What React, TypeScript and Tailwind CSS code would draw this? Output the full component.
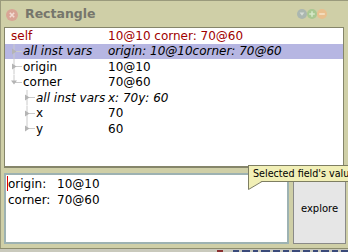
import React from 'react'

type Row = {
  name: string
  value: string
  level: number
  italic?: boolean
  selected?: boolean
  red?: boolean
  open?: boolean
  // vertical guide: 'full' | 'top'
  guide?: 'full' | 'top'
}

const rows: Row[] = [
  { name: 'self', value: '10@10 corner: 70@60', level: 0, red: true },
  { name: 'all inst vars', value: 'origin: 10@10corner: 70@60', level: 1, italic: true, selected: true, guide: 'full' },
  { name: 'origin', value: '10@10', level: 1, guide: 'full' },
  { name: 'corner', value: '70@60', level: 1, open: true, guide: 'top' },
  { name: 'all inst vars', value: 'x: 70y: 60', level: 2, italic: true, guide: 'full' },
  { name: 'x', value: '70', level: 2, guide: 'full' },
  { name: 'y', value: '60', level: 2, guide: 'top' },
]

function Connector({ open, guide }: { open?: boolean; guide?: 'full' | 'top' }) {
  return (
    <svg width="13" height="15.5" viewBox="0 0 13 15.5" className="shrink-0">
      {guide === 'full' && <line x1="5" y1="0" x2="5" y2="15.5" stroke="#cacaca" strokeWidth="1" />}
      {guide === 'top' && <line x1="5" y1="0" x2="5" y2="7.5" stroke="#cacaca" strokeWidth="1" />}
      <line x1="6" y1="7.5" x2="13" y2="7.5" stroke="#cacaca" strokeWidth="1" />
      {open ? (
        <polygon points="2,5.5 8,5.5 5,9.5" fill="#b4b4b4" />
      ) : (
        <polygon points="3,4.5 7.5,7.5 3,10.5" fill="#b4b4b4" />
      )}
    </svg>
  )
}

function TreeRow({ row }: { row: Row }) {
  const color = row.red ? 'text-[#a00000]' : 'text-black'
  return (
    <div className={`flex h-[15.5px] items-center ${row.selected ? 'bg-[#b6b6e2]' : ''}`}>
      <div className="flex w-[103px] shrink-0 items-center">
        {row.level === 0 && <div className="w-[6px]" />}
        {row.level >= 1 && (
          <>
            <div className="w-[4px] shrink-0" />
            {row.level === 1 ? (
              <Connector open={row.open} guide={row.guide} />
            ) : (
              <>
                <div className="w-[13px] shrink-0" />
                <Connector guide={row.guide} />
              </>
            )}
            <div className="w-[1px] shrink-0" />
          </>
        )}
        <span className={`whitespace-nowrap ${color} ${row.italic ? 'italic' : ''}`}>{row.name}</span>
      </div>
      <span className={`whitespace-nowrap ${color} ${row.italic ? 'italic' : ''}`}>{row.value}</span>
    </div>
  )
}

export default function App() {
  return (
    <div className="relative h-[252px] w-[348px] overflow-hidden bg-[#cfcfa7] font-['DejaVu_Sans',sans-serif] text-[12px] leading-none">
      <div className="flex h-[248px] flex-col border-l border-t border-[#9a9a7c]">
        {/* title bar */}
        <div className="flex h-[26px] shrink-0 items-center pl-[5px] pr-[21px]">
          <svg width="12" height="12" viewBox="0 0 12 12" className="mt-[2px]">
            <circle cx="6" cy="6" r="6" fill="#d9a596" />
            <path d="M3.8 3.8 L8.2 8.2 M8.2 3.8 L3.8 8.2" stroke="#f2dcd4" strokeWidth="1.6" />
          </svg>
          <span className="ml-[7px] mt-[1px] text-[12.5px] font-bold text-[#76766c]">Rectangle</span>
          <div className="flex-1" />
          <div className="flex items-center">
            <svg width="10" height="10" viewBox="0 0 10 10">
              <circle cx="5" cy="5" r="5" fill="#abb7b0" />
              <polygon points="2.6,3.6 7.4,3.6 5,6.8" fill="#d6ddd6" />
            </svg>
            <svg width="10" height="10" viewBox="0 0 10 10">
              <circle cx="5" cy="5" r="5" fill="#a9c892" />
              <path d="M5 2.2 V7.8 M2.2 5 H7.8" stroke="#d6e8c8" strokeWidth="1.6" />
            </svg>
            <svg width="10" height="10" viewBox="0 0 10 10">
              <circle cx="5" cy="5" r="5" fill="#e9c08e" />
              <path d="M2.2 5 H7.8" stroke="#f6e2c6" strokeWidth="1.6" />
            </svg>
          </div>
        </div>

        {/* inspector tree */}
        <div className="ml-[3px] h-[141px] w-[340px] shrink-0 overflow-hidden border border-b-2 border-[#85856a] bg-white">
          {rows.map((r, i) => (
            <TreeRow key={i} row={r} />
          ))}
        </div>

        {/* bottom: text pane + explore */}
        <div className="ml-[3px] mt-[5px] flex h-[71px] shrink-0 gap-[4px]">
          <div className="relative w-[285px] border-2 border-[#9db2b2] bg-white px-[2px] pt-[1px] leading-[16px]">
            <div className="absolute left-[1px] top-[1px] h-[15px] w-[1px] bg-[#e00000]" />
            <div className="flex">
              <span className="w-[49px]">origin:</span>
              <span>10@10</span>
            </div>
            <div className="flex">
              <span className="w-[49px]">corner:</span>
              <span>70@60</span>
            </div>
          </div>
          <div className="flex w-[53px] items-center justify-center border border-[#8a8a88] bg-[#e6e6e6] text-[10px] text-black">
            explore
          </div>
        </div>
      </div>

      {/* window behind */}
      <div className="flex h-[4px] items-start border-t border-[#8c8c6e] bg-[#c9c9bc]">
        <div className="ml-[217px] mt-[1px] h-[2px] w-[10px] bg-[#8a3030]" />
        <div className="ml-[10px] mt-[1px] flex gap-[3px]">
          {[6, 8, 5, 9, 7, 6, 8, 7, 5, 8, 6, 7].map((w, i) => (
            <div key={i} className="h-[2px] bg-[#3a4a7a]" style={{ width: w }} />
          ))}
        </div>
      </div>

      {/* tooltip */}
      <div className="absolute left-[248px] top-[165px]">
        <div className="flex h-[17px] w-[120px] items-center whitespace-nowrap border border-[#7e7e62] bg-[#f1efb6] pl-[4px] text-[9.6px] text-black">
          Selected field's value
        </div>
        <svg width="16" height="10" viewBox="0 0 16 10" className="absolute left-0 top-[16px]">
          <polygon points="1,0 14,0 1,8" fill="#f1efb6" />
          <path d="M0.5 0 V8.5 L14 0.5" fill="none" stroke="#7e7e62" strokeWidth="1" />
        </svg>
      </div>
    </div>
  )
}
